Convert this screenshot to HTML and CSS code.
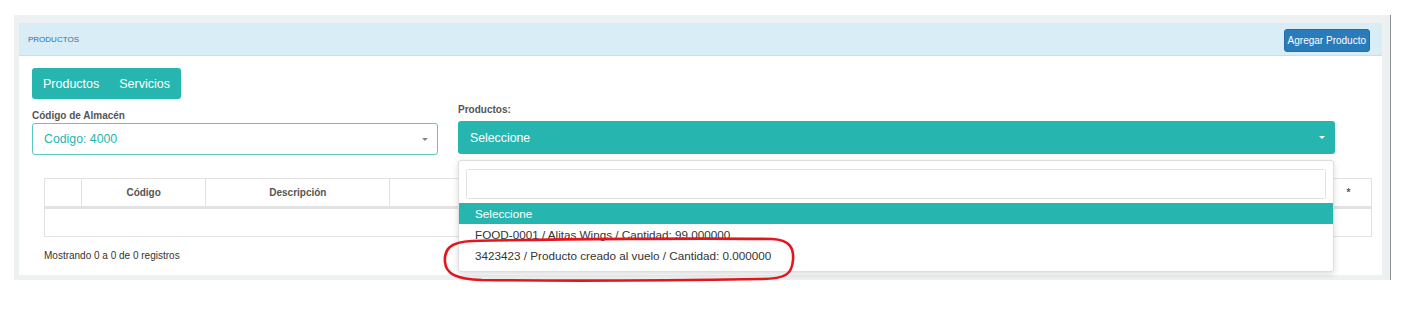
FILE: index.html
```html
<!DOCTYPE html>
<html>
<head>
  <title>Productos</title>
  <link rel="stylesheet" href="styles.css">
</head>
<body>
  <div class="page">
    <div class="frame">
      <div class="panel">
        <div class="panel-heading">
          <span class="panel-title">PRODUCTOS</span>
          <button class="btn-add">Agregar Producto</button>
        </div>
        <div class="panel-body">
          <div class="tabs">
            <span class="tab">Productos</span>
            <span class="tab">Servicios</span>
          </div>

          <div class="form-row">
            <div class="col-left">
              <label class="field-label">Código de Almacén</label>
              <div class="select select-outline">
                <span>Codigo: 4000</span>
                <span class="caret caret-gray"></span>
              </div>
            </div>
            <div class="col-right">
              <label class="field-label label-top">Productos:</label>
              <div class="select-wrap">
                <div class="select select-fill">
                  <span>Seleccione</span>
                  <span class="caret caret-white"></span>
                </div>
                <div class="dropdown">
                  <div class="search"></div>
                  <ul class="options">
                    <li class="option active">Seleccione</li>
                    <li class="option">FOOD-0001 / Alitas Wings / Cantidad: 99.000000</li>
                    <li class="option">3423423 / Producto creado al vuelo / Cantidad: 0.000000</li>
                  </ul>
                </div>
              </div>
            </div>
          </div>

          <table class="grid">
            <thead>
              <tr>
                <th class="c1"></th>
                <th class="c2">Código</th>
                <th class="c3">Descripción</th>
                <th class="c4">Unidad</th>
                <th class="c5">Cantidad</th>
                <th class="c6">Precio</th>
                <th class="c7">Total</th>
                <th class="c8">*</th>
              </tr>
            </thead>
            <tbody>
              <tr>
                <td colspan="8"></td>
              </tr>
            </tbody>
          </table>

          <div class="info">Mostrando 0 a 0 de 0 registros</div>
        </div>
      </div>
    </div>

    <svg class="mark" width="1409" height="315" viewBox="0 0 1409 315">
      <path d="M 472 241 C 560 239 700 238 772 239 C 790 240 794 248 793 260 C 792 274 786 279 760 279 C 640 281 560 281 482 280 C 456 279 446 274 445 262 C 444 249 450 242 472 241 Z" fill="none" stroke="#e5141d" stroke-width="2.6"/>
    </svg>
  </div>
</body>
</html>
```

FILE: styles.css
```css
body {
  margin: 0;
  background-color: #fff;
  font-family: "Liberation Sans", Arial, sans-serif;
  color: #333;
}

.page {
  position: relative;
  width: 1409px;
  height: 315px;
  box-sizing: border-box;
  padding-top: 15px;
}

.frame {
  width: 1363px;
  margin-left: 14px;
  padding: 8px 8px 5px 5px;
  background-color: #eef1f2;
  border-right: 1px solid #8c9194;
}

.panel {
  background-color: #fff;
}

.panel-heading {
  display: flex;
  justify-content: space-between;
  align-items: center;
  height: 32px;
  padding: 0 12px 0 9px;
  background-color: #d9edf7;
  border-bottom: 1px solid #bfe3ee;
}

.panel-title {
  font-size: 8px;
  color: #31708f;
}

.btn-add {
  height: 23px;
  padding: 0 3px;
  font-family: "Liberation Sans", Arial, sans-serif;
  font-size: 10px;
  color: #fff;
  background-color: #2a7bba;
  border: 1px solid #246ea8;
  border-radius: 3px;
  margin-top: 3px;
}

.panel-body {
  padding: 12px 11px 14px 13px;
}

.tabs {
  display: inline-flex;
  align-items: center;
  height: 31px;
  padding: 0 1px;
  background-color: #27b6af;
  border-radius: 3px;
}

.tab {
  padding: 0 10px;
  font-size: 12.5px;
  color: #fff;
}

.form-row {
  display: flex;
  gap: 20px;
}

.col-left {
  width: 406px;
  padding-top: 10px;
}

.col-right {
  width: 877px;
  padding-top: 4px;
}

.field-label {
  display: block;
  height: 14px;
  line-height: 14px;
  font-size: 10px;
  font-weight: bold;
  color: #555;
}

.label-top {
  margin-bottom: 4px;
}

.select {
  display: flex;
  justify-content: space-between;
  align-items: center;
  box-sizing: border-box;
  font-size: 12.3px;
  border-radius: 3px;
}

.select-outline {
  height: 32px;
  padding: 0 9px 0 11px;
  color: #27b6af;
  border: 1px solid #5dc7c1;
}

.select-fill {
  height: 33px;
  padding: 0 10px 0 12px;
  color: #fff;
  background-color: #27b6af;
}

.caret {
  width: 0;
  height: 0;
  border-left: 3px solid transparent;
  border-right: 3px solid transparent;
}

.caret-gray {
  border-top: 3px solid #7a8a8c;
}

.caret-white {
  border-top: 3px solid #fff;
}

.select-wrap {
  position: relative;
}

.dropdown {
  position: absolute;
  top: 39px;
  left: 0;
  width: 876px;
  box-sizing: border-box;
  padding: 8px 0 5px;
  background-color: #fff;
  border: 1px solid #dedede;
  border-radius: 3px;
  box-shadow: 0 2px 6px rgba(0, 0, 0, 0.15);
  z-index: 2;
}

.search {
  height: 30px;
  margin: 0 7px 4px 7px;
  box-sizing: border-box;
  border: 1px solid #e3e3e3;
  border-radius: 2px;
}

.options {
  list-style: none;
  margin: 0;
  padding: 0;
}

.option {
  height: 21px;
  line-height: 21px;
  padding-left: 16px;
  font-size: 11.7px;
  color: #333;
}

.option.active {
  color: #fff;
  background-color: #27b6af;
}

.grid {
  width: 1328px;
  margin: 23px 0 0 12px;
  border-collapse: collapse;
  font-size: 10px;
}

.grid th {
  height: 27px;
  padding: 0;
  font-weight: bold;
  color: #555;
  border: 1px solid #e2e2e2;
  border-bottom: 3px solid #e2e2e2;
}

.grid td {
  height: 27px;
  padding: 0;
  border: 1px solid #e2e2e2;
}

.c1 { width: 36px; }
.c2 { width: 123px; }
.c3 { width: 183px; }
.c4 { width: 240px; }
.c5 { width: 240px; }
.c6 { width: 200px; }
.c7 { width: 250px; }
.c8 { width: 45px; font-weight: normal; }

.info {
  margin: 13px 0 0 12px;
  font-size: 10px;
  color: #333;
}

.mark {
  position: absolute;
  top: 0;
  left: 0;
  z-index: 5;
  pointer-events: none;
}
```
